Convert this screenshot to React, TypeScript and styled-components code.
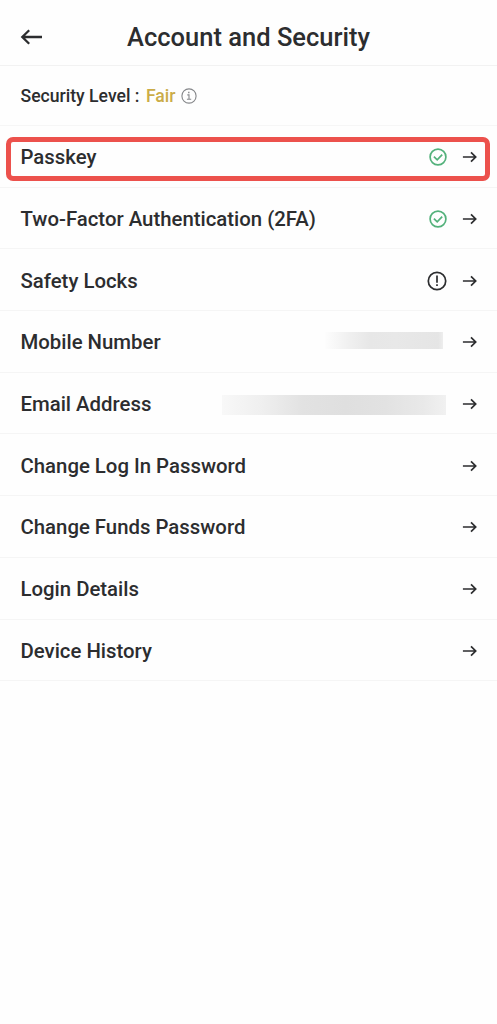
import React from "react";
import styled, { createGlobalStyle } from "styled-components";

const GlobalStyle = createGlobalStyle`
  * { box-sizing: border-box; }
  body {
    margin: 0;
    background: #fefefe;
    color: #2c2d2f;
    font-family: Roboto, "Liberation Sans", sans-serif;
  }
`;

const Screen = styled.main`
  min-height: 1024px;
  background: #fefefe;
`;

const Header = styled.header`
  display: grid;
  grid-template-columns: 48px 1fr 48px;
  align-items: center;
  height: 66px;
  padding-top: 9px;
  border-bottom: 1px solid #f2f2f2;
`;

const BackButton = styled.button`
  display: flex;
  padding: 0 0 0 20px;
  border: 0;
  background: none;
  color: inherit;
`;

const Title = styled.h1`
  margin: 0;
  font-size: 25.5px;
  line-height: 32px;
  font-weight: 500;
  text-align: center;
  white-space: nowrap;
`;

const Level = styled.section`
  display: flex;
  align-items: center;
  height: 60px;
  padding: 0 20.5px;
  border-bottom: 1px solid #f6f6f6;
  font-size: 17.6px;
  font-weight: 500;
  white-space: pre;
`;

const LevelValue = styled.span`
  margin: 0 5.5px 0 6.5px;
  color: #cbac48;
`;

const List = styled.ul`
  margin: 0;
  padding: 0;
  list-style: none;
`;

const Row = styled.li`
  position: relative;
  display: flex;
  align-items: center;
  height: 61.7px;
  padding: 2px 19px 0 20.5px;
  border-bottom: 1px solid #f5f5f5;
`;

const Label = styled.span`
  flex: 1;
  font-size: 20.35px;
  line-height: 26px;
  font-weight: 500;
  white-space: nowrap;
`;

const Trailing = styled.span`
  display: flex;
  align-items: center;
  margin-right: 15px;
`;

const Redacted = styled.span<{ $kind: "phone" | "email" }>`
  width: ${({ $kind }) => ($kind === "phone" ? 118 : 224)}px;
  height: ${({ $kind }) => ($kind === "phone" ? 17 : 20)}px;
  margin-right: ${({ $kind }) => ($kind === "phone" ? 4 : 1)}px;
  margin-top: ${({ $kind }) => ($kind === "phone" ? -3 : 1)}px;
  background: ${({ $kind }) =>
    $kind === "phone"
      ? "linear-gradient(90deg, #fdfdfd, #f0f0f0 20%, #e7e7e7 38%, #e8e8e8 60%, #e5e5e5 96%, #eeeeee)"
      : "linear-gradient(90deg, #f8f8f8, #efefef 18%, #e2e2e2 36%, #dfdfdf 55%, #e2e2e2 73%, #e9e9e9 90%, #f1f1f1)"};
`;

const Highlight = styled.span`
  position: absolute;
  top: 11px;
  left: 6px;
  right: 7px;
  height: 44px;
  border: 5px solid #ec514c;
  border-radius: 7px;
  pointer-events: none;
`;

const BackIcon = () => (
  <svg width="23" height="18" viewBox="0 0 23 18" fill="none" stroke="currentColor" strokeWidth="2.3">
    <path d="M22 9H2.5M9.2 2.2L2.3 9l6.9 6.8" />
  </svg>
);

const ForwardIcon = () => (
  <svg width="16" height="14" viewBox="0 0 16 14" fill="none" stroke="currentColor" strokeWidth="1.7">
    <path d="M.9 7h12.6M9 2.4L13.7 7 9 11.6" />
  </svg>
);

const InfoIcon = () => (
  <svg width="16" height="16" viewBox="0 0 16 16" fill="none" stroke="#85878a" strokeWidth="1.1">
    <circle cx="8" cy="8" r="7.1" />
    <path d="M6.3 6.9H8v4.4M5.9 11.3h4.3" />
    <path d="M7.1 4.4h1.4" strokeWidth="1.5" />
  </svg>
);

const CheckIcon = () => (
  <svg width="18" height="18" viewBox="0 0 18 18" fill="none" stroke="#53b17b" strokeWidth="1.7">
    <circle cx="9" cy="9" r="7.9" />
    <path d="M4.9 8.6l3.3 3.2 5-5.1" />
  </svg>
);

const AlertIcon = () => (
  <svg width="20" height="20" viewBox="0 0 20 20" fill="none" stroke="#2c2d2f" strokeWidth="1.7">
    <circle cx="10" cy="10" r="8.7" />
    <path d="M10 4.4v7.4M10 13.3v1.8" />
  </svg>
);

type Item = { label: string; trailing?: React.ReactNode; highlighted?: boolean };

const items: Item[] = [
  { label: "Passkey", trailing: <CheckIcon />, highlighted: true },
  { label: "Two-Factor Authentication (2FA)", trailing: <CheckIcon /> },
  { label: "Safety Locks", trailing: <AlertIcon /> },
  { label: "Mobile Number", trailing: <Redacted $kind="phone" /> },
  { label: "Email Address", trailing: <Redacted $kind="email" /> },
  { label: "Change Log In Password" },
  { label: "Change Funds Password" },
  { label: "Login Details" },
  { label: "Device History" },
];

export default function App() {
  return (
    <Screen>
      <GlobalStyle />
      <Header>
        <BackButton aria-label="Back">
          <BackIcon />
        </BackButton>
        <Title>Account and Security</Title>
      </Header>
      <Level>
        <span>Security Level :</span>
        <LevelValue>Fair</LevelValue>
        <InfoIcon />
      </Level>
      <List>
        {items.map(({ label, trailing, highlighted }) => (
          <Row key={label}>
            <Label>{label}</Label>
            {trailing && <Trailing>{trailing}</Trailing>}
            <ForwardIcon />
            {highlighted && <Highlight />}
          </Row>
        ))}
      </List>
    </Screen>
  );
}
